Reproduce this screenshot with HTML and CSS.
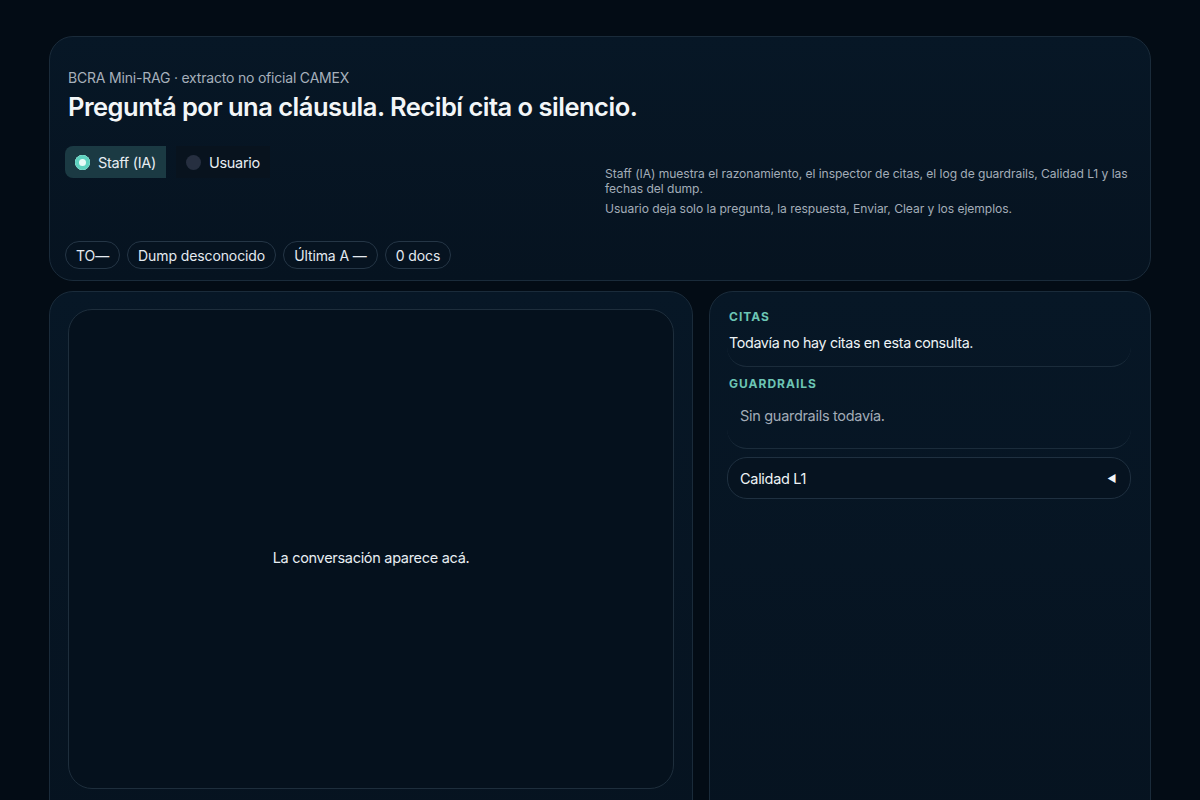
FILE: index.html
```html
<!DOCTYPE html>
<html lang="es">
<head>
<meta charset="utf-8">
<title>BCRA Mini-RAG</title>
<link rel="stylesheet" href="styles.css">
</head>
<body>
<main class="app">
  <section class="hero card">
    <div class="hero-titles">
      <p class="eyebrow">BCRA Mini-RAG · extracto no oficial CAMEX</p>
      <h1 class="headline">Preguntá por una cláusula. Recibí cita o silencio.</h1>
    </div>
    <div class="mode-row">
      <div class="mode-switch" role="radiogroup">
        <label class="mode-option is-on"><span class="dot"></span>Staff (IA)</label>
        <label class="mode-option"><span class="dot"></span>Usuario</label>
      </div>
      <div class="mode-help">
        <p>Staff (IA) muestra el razonamiento, el inspector de citas, el log de guardrails, Calidad L1 y las fechas del dump.</p>
        <p>Usuario deja solo la pregunta, la respuesta, Enviar, Clear y los ejemplos.</p>
      </div>
    </div>
    <div class="chips">
      <span class="chip">TO—</span>
      <span class="chip">Dump desconocido</span>
      <span class="chip">Última A —</span>
      <span class="chip">0 docs</span>
    </div>
  </section>

  <div class="workspace">
    <section class="chat card">
      <div class="chat-log">
        <p class="chat-empty">La conversación aparece acá.</p>
      </div>
    </section>

    <aside class="inspector card">
      <div class="block">
        <h2 class="block-title">Citas</h2>
        <p class="block-text">Todavía no hay citas en esta consulta.</p>
      </div>
      <h2 class="block-title">Guardrails</h2>
      <div class="block block-muted">
        <p class="muted-text">Sin guardrails todavía.</p>
      </div>
      <div class="accordion">
        <span>Calidad L1</span>
        <span class="caret">◀</span>
      </div>
    </aside>
  </div>
</main>
</body>
</html>
```

FILE: styles.css
```css
* { box-sizing: border-box; }

html, body {
  margin: 0;
  height: 100%;
}

body {
  background: #030c15;
  color: #e8eef3;
  font-family: Inter, "Noto Sans", sans-serif;
  overflow: hidden;
}

p, h1, h2 { margin: 0; }

.app {
  width: 1102px;
  margin: 36px auto 0 49px;
  display: flex;
  flex-direction: column;
  gap: 10px;
}

.card {
  background: linear-gradient(180deg, #071726 0%, #061320 100%);
  border: 1px solid #1a2b3a;
  border-radius: 24px;
}

/* header */
.hero {
  padding: 31px 15px 10px 15px;
  height: 245px;
  display: flex;
  flex-direction: column;
}

.hero-titles { padding-left: 3px; }

.eyebrow {
  font-size: 14px;
  line-height: 20px;
  color: #a6b0bb;
  letter-spacing: -0.2px;
}

.headline {
  margin-top: 3px;
  font-size: 25.5px;
  line-height: 32px;
  font-weight: 600;
  color: #f3f6f8;
  letter-spacing: -0.5px;
}

.mode-row {
  margin-top: 23px;
  display: grid;
  grid-template-columns: 530px 1fr;
  column-gap: 10px;
}

.mode-switch {
  display: flex;
  align-self: start;
  gap: 10px;
}

.mode-option {
  display: flex;
  align-items: center;
  gap: 8px;
  height: 32px;
  padding: 0 10px;
  font-size: 14.5px;
  color: #e7edf2;
  background: #08131e;
  letter-spacing: -0.3px;
}

.mode-option.is-on {
  background: #1b3a43;
  border-radius: 8px 0 0 8px;
}

.dot {
  width: 15px;
  height: 15px;
  border-radius: 50%;
  background: #262f40;
  flex: none;
}

.is-on .dot {
  background: #5fd2bf;
  box-shadow: inset 0 0 0 4px #5fd2bf, inset 0 0 0 8px #e8fbf7;
}

.mode-help {
  padding-top: 20px;
  font-size: 12.1px;
  line-height: 15px;
  color: #a3adb8;
  letter-spacing: -0.05px;
}

.mode-help p + p { margin-top: 5px; }

.chips {
  margin-top: auto;
  margin-bottom: 1px;
  display: flex;
  gap: 7px;
}

.chip {
  height: 28px;
  display: inline-flex;
  align-items: center;
  padding: 0 10px;
  border: 1px solid #253646;
  border-radius: 14px;
  font-size: 14px;
  color: #e4eaf0;
  background: #061320;
  letter-spacing: -0.1px;
}

/* lower area */
.workspace {
  display: grid;
  grid-template-columns: 644px 442px;
  column-gap: 16px;
  height: 540px;
}

.chat {
  padding: 17px 18px 0 18px;
  border-bottom-left-radius: 0;
  border-bottom-right-radius: 0;
}

.chat-log {
  height: 480px;
  padding-top: 16px;
  border: 1px solid #1e2e3c;
  border-radius: 24px;
  background: #05111d;
  display: flex;
  align-items: center;
  justify-content: center;
}

.chat-empty {
  font-size: 14.5px;
  color: #e8eef3;
  letter-spacing: -0.3px;
}

.inspector {
  padding: 16px 19px 0 17px;
  display: flex;
  flex-direction: column;
  border-bottom-left-radius: 0;
  border-bottom-right-radius: 0;
}

.block {
  border-bottom: 1px solid #1b2c3b;
  border-radius: 0 0 20px 20px;
}

.block-title {
  padding-left: 2px;
  font-size: 12px;
  line-height: 18px;
  font-weight: 700;
  letter-spacing: 1px;
  text-transform: uppercase;
  color: #6cc5b4;
}

.block-text {
  padding: 7px 2px 13px;
  font-size: 14.3px;
  line-height: 20px;
  color: #eef3f6;
  letter-spacing: -0.35px;
}

.inspector > .block-title { margin-top: 8px; }

.block-muted {
  margin-top: 4px;
  padding: 9px 13px 22px;
}

.muted-text {
  font-size: 14.5px;
  line-height: 20px;
  color: #a2acb7;
  letter-spacing: -0.3px;
}

.accordion {
  margin-top: 8px;
  height: 42px;
  display: flex;
  align-items: center;
  justify-content: space-between;
  padding: 0 14px 0 12px;
  border: 1px solid #1f3040;
  border-radius: 20px;
  background: #061320;
  font-size: 14.5px;
  color: #eef3f6;
  letter-spacing: -0.3px;
}

.caret {
  font-size: 10px;
  color: #f2f5f7;
}
```
